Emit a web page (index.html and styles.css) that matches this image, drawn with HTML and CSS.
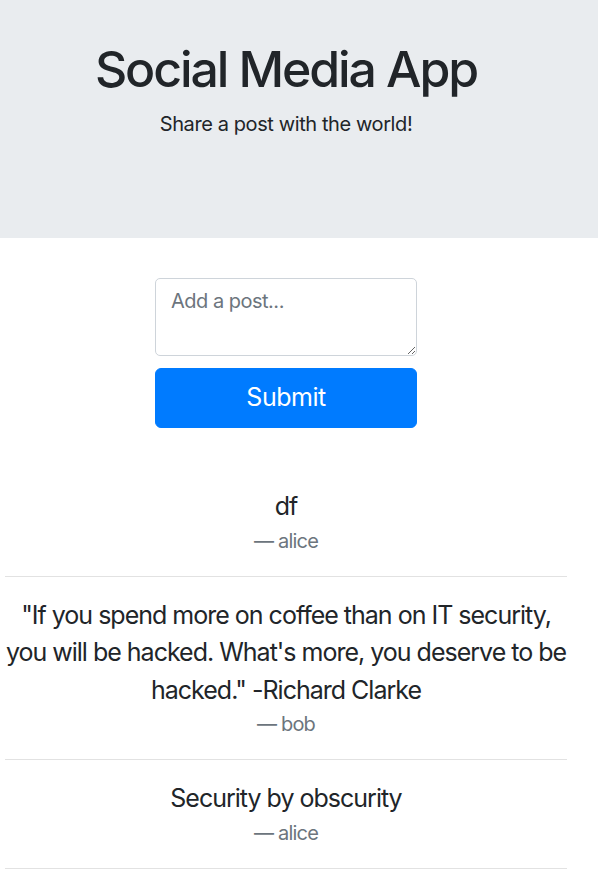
FILE: index.html
```html
<!DOCTYPE html>
<html lang="en">
<head>
<meta charset="utf-8">
<title>Social Media App</title>
<link rel="stylesheet" href="styles.css">
</head>
<body>
<div class="page">
  <header class="jumbotron">
    <div class="inner">
      <h1 class="title">Social Media App</h1>
      <p class="lead">Share a post with the world!</p>
    </div>
  </header>
  <main class="inner">
    <form class="post-form">
      <textarea class="post-input" rows="2" placeholder="Add a post..."></textarea>
      <button type="button" class="btn-submit">Submit</button>
    </form>
    <section class="posts">
      <div class="post">
        <blockquote class="post-text">df</blockquote>
        <footer class="post-author">— alice</footer>
      </div>
      <hr class="divider">
      <div class="post">
        <blockquote class="post-text">"If you spend more on coffee than on IT security, you will be hacked. What's more, you deserve to be hacked." -Richard Clarke</blockquote>
        <footer class="post-author">— bob</footer>
      </div>
      <hr class="divider">
      <div class="post">
        <blockquote class="post-text">Security by obscurity</blockquote>
        <footer class="post-author">— alice</footer>
      </div>
      <hr class="divider">
    </section>
  </main>
</div>
</body>
</html>
```
FILE: styles.css
```css
* { box-sizing: border-box; }
html, body {
  margin: 0;
  padding: 0;
  background: #fff;
}
body {
  font-family: Inter, "Noto Sans", "Liberation Sans", sans-serif;
  color: #212529;
  font-size: 20px;
  line-height: 1.5;
}
.page {
  width: 598px;
  text-align: center;
}
.inner {
  width: 572px;
}
.jumbotron {
  background: #e9ecef;
  padding: 39px 0 79px;
  margin-bottom: 40px;
}
.title {
  margin: 0 0 10px;
  font-size: 50px;
  font-weight: 500;
  line-height: 1.2;
  letter-spacing: -2.1px;
}
.lead {
  margin: 0 0 20px;
  font-size: 20px;
  line-height: 30px;
  letter-spacing: -0.4px;
}
.post-form {
  width: 262px;
  margin: 0 auto;
  display: flex;
  flex-direction: column;
  gap: 12px;
}
.post-input {
  display: block;
  width: 100%;
  height: 78px;
  padding: 7px 15px;
  font-family: inherit;
  font-size: 20px;
  line-height: 30px;
  letter-spacing: -0.5px;
  color: #495057;
  border: 1px solid #ced4da;
  border-radius: 5px;
  background: #fff;
  resize: vertical;
}
.post-input::placeholder { color: #6c757d; opacity: 1; }
.btn-submit {
  display: block;
  width: 100%;
  height: 60px;
  padding: 10px 20px;
  font-family: inherit;
  font-size: 25px;
  line-height: 37.5px;
  letter-spacing: -0.5px;
  color: #fff;
  background: #007bff;
  border: 1px solid #007bff;
  border-radius: 6px;
}
.posts {
  padding-top: 60px;
}
.post-text {
  margin: 0;
  font-size: 25px;
  line-height: 37.5px;
  letter-spacing: -1px;
}
.post-author {
  font-size: 20px;
  line-height: 30px;
  letter-spacing: -0.8px;
  color: #6c757d;
}
.divider {
  margin: 20px 5px;
  border: 0;
  border-top: 1px solid #e2e2e2;
}
```
